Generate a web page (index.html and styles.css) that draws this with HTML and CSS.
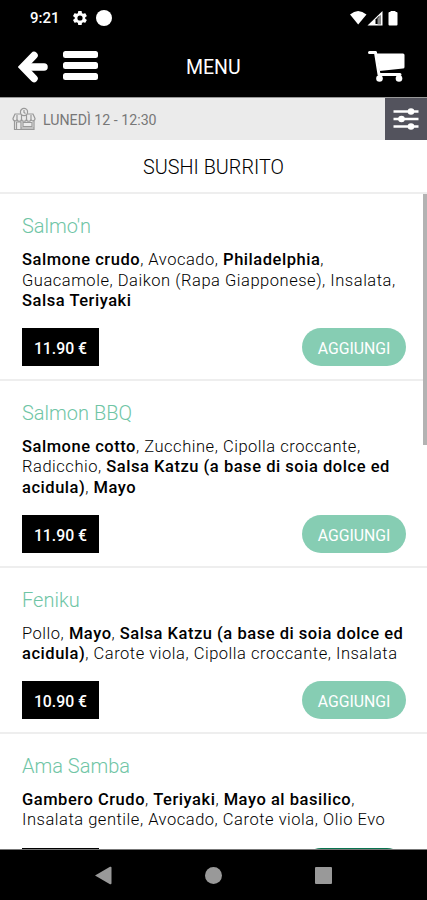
FILE: index.html
```html
<!DOCTYPE html>
<html lang="it">
<head>
  <meta charset="UTF-8" />
  <meta name="viewport" content="width=device-width, initial-scale=1.0"/>
  <title>Menu</title>
  <link rel="stylesheet" href="styles.css">
</head>
<body>
  <div class="status-bar">
    <span class="clock">9:21</span>
    <svg class="gear" width="14" height="14" viewBox="2 2 20 20"><path fill="#fff" fill-rule="evenodd" d="M19.4 13a7.500 7.500 0 0 0 0-2l2.100-1.600a.5.5 0 0 0 .1-.7l-2-3.400a.5.5 0 0 0-.6-.2l-2.500 1a7.300 7.300 0 0 0-1.700-1l-.4-2.600a.5.5 0 0 0-.5-.5h-4a.5.5 0 0 0-.5.5L9 5.100a7.700 7.700 0 0 0-1.700 1l-2.500-1a.5.5 0 0 0-.6.2l-2 3.400a.5.5 0 0 0 .1.700L4.500 11a8 8 0 0 0 0 2l-2.200 1.600a.5.5 0 0 0-.1.700l2 3.400c.1.200.4.300.6.200l2.500-1a7.300 7.300 0 0 0 1.700 1l.4 2.600c0 .3.300.5.500.5h4c.3 0 .5-.2.500-.5l.4-2.600a7.700 7.700 0 0 0 1.700-1l2.500 1c.2.100.5 0 .6-.2l2-3.400a.5.5 0 0 0-.1-.7zM12 15.700a3.700 3.700 0 1 1 0-7.400 3.700 3.700 0 0 1 0 7.400z"/></svg>
    <span class="dot"></span>
    <svg class="signals" width="50" height="16" viewBox="0 0 50 16">
      <path fill="#fff" d="M1 4.500Q9-2.500 17.500 4.500L9.200 14.500z"/>
      <path fill="#fff" d="M18.500 15.500L33.500 1v14.500z"/>
      <path fill="#000" d="M26.500 9.500l4-4v8.500h-4z"/>
      <path fill="#888" d="M28.500 8.500l3.500-4v10h-3.500z"/>
      <path fill="#fff" d="M41.500 1h5v1h1q1 0 1 1v11.500q0 1-1 1h-7q-1 0-1-1V3q0-1 1-1h1z"/>
    </svg>
  </div>

  <div class="header">
    <svg class="back" width="30" height="32" viewBox="0 0 30 32" fill="none" stroke="#fff" stroke-width="7.500" stroke-linecap="round" stroke-linejoin="miter"><path d="M16 4.500L5 16l11 11.500"/><path d="M6 16h20"/></svg>
    <div class="burger"><span></span><span></span><span></span></div>
    <h1>MENU</h1>
    <svg class="cart" width="38" height="33" viewBox="0 0 38 33"><path fill="none" stroke="#fff" stroke-width="3" stroke-linecap="round" stroke-linejoin="round" d="M2.500 2.500h6l3.500 22h21"/><path fill="#fff" d="M9.500 3.500H36q1.500 0 1.500 1.500v12q0 1.500-1.500 1.600l-23.500 2.400z"/><circle fill="#fff" cx="12.500" cy="28.500" r="3.300"/><circle fill="#fff" cx="32" cy="28.500" r="3.300"/></svg>
  </div>

  <div class="slot-bar">
    <svg class="shop" width="24" height="24" viewBox="0 0 24 24" fill="none" stroke="#999" stroke-width="1.200"><path d="M3 7h18l2 4.500c0 3-4 3-4 .5 0 3-4.500 3-4.500 0 0 3-5 3-5 0 0 3-4.500 3-4.500 0 0 2.500-4 2.500-4-.5z"/><path d="M2.500 14v8.500h19.500V14M4.500 22v-7h4.500v7M11 15.500h9v4h-9zM9 21h13"/><circle cx="12" cy="5" r="3.600" fill="#ebebeb"/><path d="M12 3v2.500l1.500 1M5 8v4M9.500 8v4M14.500 8v4M19 8v4"/></svg>
    <span class="slot">LUNEDÌ 12 - 12:30</span>
    <div class="filter">
      <svg width="26" height="22" viewBox="0 0 26 22"><path stroke="#fff" stroke-width="2.400" d="M.5 3.500h25M.5 11h25M.5 18.500h25"/><g fill="#fff"><circle cx="18" cy="3.500" r="3.300"/><circle cx="8.500" cy="11" r="3.300"/><circle cx="18" cy="18.500" r="3.300"/></g></svg>
    </div>
  </div>

  <h2>SUSHI BURRITO</h2>

  <div class="menu">
    <div class="item">
      <h3>Salmo'n</h3>
      <p><b>Salmone crudo</b>, Avocado, <b>Philadelphia</b>,<br>Guacamole, Daikon (Rapa Giapponese), Insalata,<br><b>Salsa Teriyaki</b></p>
      <div class="actions"><span class="price">11.90 €</span><button class="add">AGGIUNGI</button></div>
    </div>
    <div class="item">
      <h3>Salmon BBQ</h3>
      <p><b>Salmone cotto</b>, Zucchine, Cipolla croccante,<br>Radicchio, <b>Salsa Katzu (a base di soia dolce ed<br>acidula)</b>, <b>Mayo</b></p>
      <div class="actions"><span class="price">11.90 €</span><button class="add">AGGIUNGI</button></div>
    </div>
    <div class="item">
      <h3>Feniku</h3>
      <p>Pollo, <b>Mayo</b>, <b>Salsa Katzu (a base di soia dolce ed<br>acidula)</b>, Carote viola, Cipolla croccante, Insalata</p>
      <div class="actions"><span class="price">10.90 €</span><button class="add">AGGIUNGI</button></div>
    </div>
    <div class="item">
      <h3>Ama Samba</h3>
      <p><b>Gambero Crudo</b>, <b>Teriyaki</b>, <b>Mayo al basilico</b>,<br>Insalata gentile, Avocado, Carote viola, Olio Evo</p>
      <div class="actions cut"><span class="price"></span><span class="add"></span></div>
    </div>
    <div class="scrollbar"></div>
  </div>

  <div class="nav-bar">
    <svg width="17" height="19" viewBox="0 0 17 19"><path fill="#999" d="M0 9.500L15 .8q1.500-.5 1.500 1v15.400q0 1.500-1.500 1z"/></svg>
    <span class="home"></span>
    <span class="recent"></span>
  </div>
</body>
</html>
```
FILE: styles.css
```css
* {
  box-sizing: border-box;
}
body {
  font-family: Roboto, "Liberation Sans", sans-serif;
  background-color: #fff;
  color: #000;
  margin: 0;
  width: 427px;
  height: 900px;
  overflow: hidden;
  display: flex;
  flex-direction: column;
}
h1, h2, h3, p {
  margin: 0;
  white-space: nowrap;
}
.status-bar {
  height: 36px;
  background-color: #000;
  color: #fff;
  display: flex;
  align-items: center;
  padding: 0 28px 0 30px;
}
.clock {
  width: 43px;
  font-size: 15px;
  font-weight: 500;
}
.dot {
  width: 16px;
  height: 16px;
  margin-left: 9px;
  border-radius: 50%;
  background-color: #fff;
}
.signals {
  margin-left: auto;
}
.header {
  height: 61px;
  background-color: #000;
  color: #fff;
  display: flex;
  align-items: center;
  padding: 0 22px 0 18px;
}
.burger {
  display: flex;
  flex-direction: column;
  gap: 4.500px;
  margin: -2px 0 0 15px;
}
.burger span {
  width: 35px;
  height: 6.500px;
  border-radius: 2.500px;
  background-color: #fff;
}
.header h1 {
  flex: 1;
  padding: 1px 0 0 88px;
  font-size: 19.500px;
  font-weight: 400;
}
.slot-bar {
  height: 43px;
  background-color: #ebebeb;
  border-top: 1px solid #999;
  display: flex;
  align-items: center;
  padding-left: 12px;
}
.slot {
  margin-left: 7px;
  padding-top: 2px;
  font-size: 14.200px;
  color: #777;
}
.filter {
  width: 42px;
  height: 42px;
  margin-left: auto;
  background-color: #53535d;
  display: flex;
  align-items: center;
  justify-content: center;
}
h2 {
  height: 54px;
  line-height: 55px;
  border-bottom: 2px solid #eee;
  text-align: center;
  font-size: 19.800px;
  font-weight: 300;
}
.menu {
  position: relative;
  height: 655px;
  overflow: hidden;
}
.item {
  padding: 20px 21px 13px 22px;
  border-bottom: 2px solid #eee;
}
h3 {
  height: 36px;
  line-height: 24px;
  font-size: 20px;
  font-weight: 300;
  color: #6fc5a5;
}
p {
  font-size: 16.500px;
  line-height: 20.600px;
  font-weight: 300;
  letter-spacing: 0.530px;
}
b {
  font-weight: 500;
}
.actions {
  display: flex;
  justify-content: space-between;
  margin-top: 16px;
}
.price {
  width: 77px;
  height: 38px;
  line-height: 41px;
  background-color: #000;
  color: #fff;
  text-align: center;
  font-size: 15.800px;
  font-weight: 500;
}
.add {
  width: 104px;
  height: 38px;
  padding: 3px 0 0;
  border: none;
  border-radius: 19px;
  background-color: #86cdb3;
  color: #fff;
  font-family: inherit;
  font-size: 15.800px;
}
.cut {
  margin-top: 17px;
}
.cut .add {
  background-color: #08734f;
}
.scrollbar {
  position: absolute;
  top: 0;
  right: 0;
  width: 4px;
  height: 251px;
  background-color: #b3b3b3;
}
.nav-bar {
  flex: 1;
  background-color: #000;
  border-top: 1px solid #777;
  display: flex;
  align-items: center;
  justify-content: space-between;
  padding: 0 95px;
}
.home {
  width: 17px;
  height: 17px;
  border-radius: 50%;
  background-color: #999;
}
.recent {
  width: 17px;
  height: 17px;
  border-radius: 1px;
  background-color: #999;
}
```
